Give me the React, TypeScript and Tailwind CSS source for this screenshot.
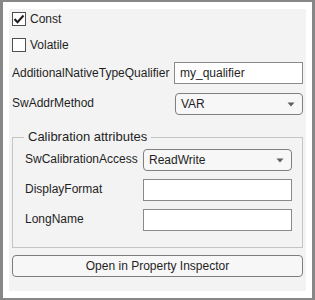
import React from "react";

const font = { fontFamily: '"Liberation Sans", Arial, sans-serif' };

function CheckBox({ checked, label }: { checked: boolean; label: string }) {
  return (
    <div className="flex items-center h-[14px] gap-[4px]">
      <div className="w-[14px] h-[14px] border border-[#4f4f4f] bg-white flex items-center justify-center shrink-0">
        {checked && (
          <svg width="12" height="12" viewBox="0 0 12 12">
            <polyline points="1.5,6 4.5,9.2 10.5,2.5" fill="none" stroke="#1a1a1a" strokeWidth="2" />
          </svg>
        )}
      </div>
      <span className="text-[12px] leading-[14px] text-[#1f1f1f]">{label}</span>
    </div>
  );
}

function Dropdown({ value, w }: { value: string; w: string }) {
  return (
    <div className={`${w} h-[22px] rounded-[4px] border border-[#7f7f7f] bg-[#f7f7f7] flex items-center justify-between pl-[5px] pr-[7px]`}>
      <span className="text-[12px] text-[#1f1f1f]">{value}</span>
      <svg width="8" height="5" viewBox="0 0 8 5">
        <polygon points="0.5,0.5 7.5,0.5 4,4.5" fill="#5f5f5f" />
      </svg>
    </div>
  );
}

function TextInput({ value, w }: { value: string; w: string }) {
  return (
    <div className={`${w} h-[22px] border border-[#8a8a8a] bg-white flex items-center px-[5px]`}>
      <span className="text-[12px] text-[#1f1f1f]">{value}</span>
    </div>
  );
}

export default function App() {
  return (
    <div style={font} className="w-[315px] h-[300px] bg-white border-l-[3px] border-r-[3px] border-t-2 border-b-2 border-[#878787] pt-[7px] pb-[7px] px-[6px]">
      <div className="w-[297px] h-[282px] bg-[#f3f3f3] px-[3px] pt-[3px] flex flex-col">
        <CheckBox checked label="Const" />
        <div className="mt-[12px]">
          <CheckBox checked={false} label="Volatile" />
        </div>
        <div className="mt-[10px] flex items-center justify-between h-[22px]">
          <span className="text-[12px] text-[#1f1f1f]">AdditionalNativeTypeQualifier</span>
          <TextInput value="my_qualifier" w="w-[129px]" />
        </div>
        <div className="mt-[9px] flex items-center justify-between h-[22px]">
          <span className="text-[12px] text-[#1f1f1f] -mt-[2px]">SwAddrMethod</span>
          <Dropdown value="VAR" w="w-[128px]" />
        </div>
        <div className="relative mt-[22px] h-[111px] border border-[#c4c4c4] pt-[11px] pl-[12px] pr-[10px] flex flex-col">
          <span className="absolute -top-[9px] left-[11px] px-[4px] bg-[#f3f3f3] text-[13px] leading-[15px] text-[#1f1f1f]">
            Calibration attributes
          </span>
          <div className="flex items-center justify-between h-[22px]">
            <span className="text-[12px] text-[#1f1f1f] -mt-[2px]">SwCalibrationAccess</span>
            <Dropdown value="ReadWrite" w="w-[149px]" />
          </div>
          <div className="mt-[8px] flex items-center justify-between h-[22px]">
            <span className="text-[12px] text-[#1f1f1f] -mt-[2px]">DisplayFormat</span>
            <TextInput value="" w="w-[149px]" />
          </div>
          <div className="mt-[8px] flex items-center justify-between h-[22px]">
            <span className="text-[12px] text-[#1f1f1f] -mt-[2px]">LongName</span>
            <TextInput value="" w="w-[149px]" />
          </div>
        </div>
        <div className="mt-[7px] h-[22px] rounded-[4px] border border-[#7d7d7d] bg-[#f7f7f7] flex items-center justify-center">
          <span className="text-[12px] text-[#1f1f1f]">Open in Property Inspector</span>
        </div>
      </div>
    </div>
  );
}
